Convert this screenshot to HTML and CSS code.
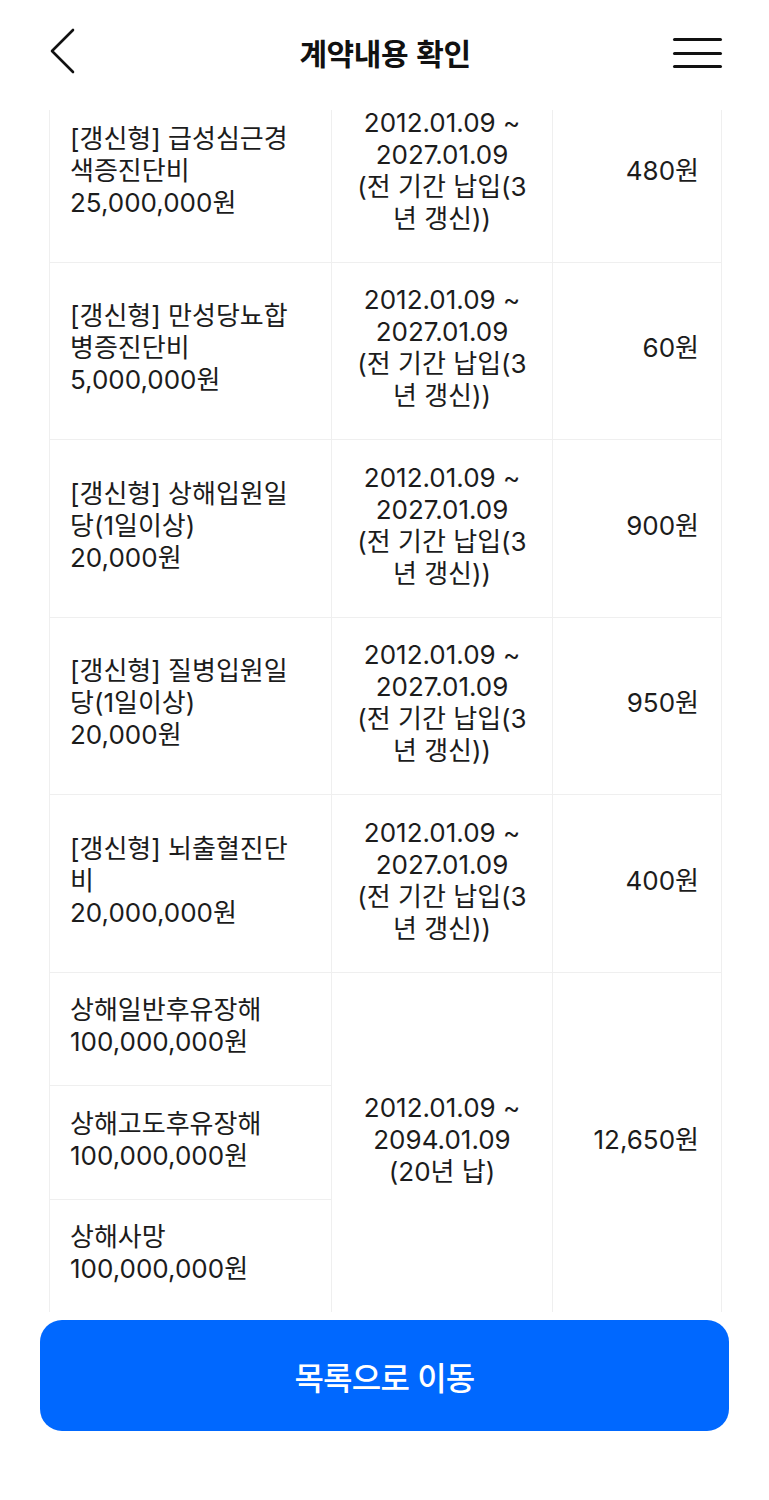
FILE: index.html
```html
<!DOCTYPE html>
<html lang="ko">
<head>
<meta charset="utf-8">
<title>계약내용 확인</title>
<link rel="stylesheet" href="styles.css">
</head>
<body>
<div class="page">
  <header class="topbar">
    <button class="icon-btn back" aria-label="뒤로">
      <svg width="30" height="46" viewBox="0 0 30 46"><path d="M25 2 L4 23 L25 44" fill="none" stroke="#111" stroke-width="2.6" stroke-linecap="round" stroke-linejoin="round"/></svg>
    </button>
    <h1 class="title">계약내용 확인</h1>
    <button class="icon-btn menu" aria-label="메뉴">
      <span class="bar"></span><span class="bar"></span><span class="bar"></span>
    </button>
  </header>

  <div class="scroll">
    <table class="contract">
      <colgroup>
        <col class="c1"><col class="c2"><col class="c3">
      </colgroup>
      <tbody>
        <tr>
          <td class="name">[갱신형] 급성심근경<br>색증진단비<br>25,000,000원</td>
          <td class="period">2012.01.09 ~<br>2027.01.09<br>(전 기간 납입(3<br>년 갱신))</td>
          <td class="amount">480원</td>
        </tr>
        <tr>
          <td class="name">[갱신형] 만성당뇨합<br>병증진단비<br>5,000,000원</td>
          <td class="period">2012.01.09 ~<br>2027.01.09<br>(전 기간 납입(3<br>년 갱신))</td>
          <td class="amount">60원</td>
        </tr>
        <tr>
          <td class="name">[갱신형] 상해입원일<br>당(1일이상)<br>20,000원</td>
          <td class="period">2012.01.09 ~<br>2027.01.09<br>(전 기간 납입(3<br>년 갱신))</td>
          <td class="amount">900원</td>
        </tr>
        <tr>
          <td class="name">[갱신형] 질병입원일<br>당(1일이상)<br>20,000원</td>
          <td class="period">2012.01.09 ~<br>2027.01.09<br>(전 기간 납입(3<br>년 갱신))</td>
          <td class="amount">950원</td>
        </tr>
        <tr>
          <td class="name">[갱신형] 뇌출혈진단<br>비<br>20,000,000원</td>
          <td class="period">2012.01.09 ~<br>2027.01.09<br>(전 기간 납입(3<br>년 갱신))</td>
          <td class="amount">400원</td>
        </tr>
        <tr>
          <td class="name">상해일반후유장해<br>100,000,000원</td>
          <td class="period" rowspan="3">2012.01.09 ~<br>2094.01.09<br>(20년 납)</td>
          <td class="amount" rowspan="3">12,650원</td>
        </tr>
        <tr>
          <td class="name">상해고도후유장해<br>100,000,000원</td>
        </tr>
        <tr>
          <td class="name">상해사망<br>100,000,000원</td>
        </tr>
      </tbody>
    </table>
  </div>

  <div class="actions">
    <button class="primary">목록으로 이동</button>
  </div>
</div>
</body>
</html>
```

FILE: styles.css
```css
* { box-sizing: border-box; }
html, body { margin: 0; padding: 0; background: #fff; }
body {
  font-family: "Inter", "Noto Sans CJK KR", sans-serif;
  color: #1c1c1c;
  width: 769px;
}
.page { width: 769px; }

.topbar {
  height: 110px;
  display: grid;
  grid-template-columns: 1fr auto 1fr;
  align-items: center;
  padding: 0 47px 0 48px;
}
.icon-btn {
  background: none;
  border: 0;
  padding: 0;
  margin: 0;
  display: flex;
  cursor: pointer;
}
.back { margin-top: -8px; justify-self: start; }
.menu {
  justify-self: end;
  flex-direction: column;
  gap: 10.5px;
  width: 49px;
  margin-top: -4px;
}
.bar {
  display: block;
  width: 49px;
  height: 3px;
  background: #111;
  border-radius: 1.5px;
}
.title {
  margin: 0;
  font-size: 30px;
  font-weight: 700;
  color: #111;
  letter-spacing: -0.4px;
  margin-top: -6px;
  font-family: "Noto Sans CJK KR", sans-serif;
}

.scroll {
  height: 1202px;
  overflow: hidden;
  padding: 0 48px 0 49px;
}
.contract {
  width: 672px;
  border-collapse: collapse;
  margin-top: -26px;
  table-layout: fixed;
  font-size: 26px;
  line-height: 32px;
}
.c1 { width: 282px; }
.c2 { width: 221px; }
.c3 { width: 169px; }
.contract td {
  border: 1px solid #efefef;
  padding: 21.5px 0 27px;
  vertical-align: middle;
}
.name {
  padding-left: 20px !important;
  padding-right: 6px !important;
  text-align: left;
}
.period { text-align: center; }
.amount {
  text-align: right;
  padding-right: 22px !important;
}

.actions {
  padding: 8px 40px 0 40px;
}
.primary {
  width: 689px;
  height: 111px;
  border: 0;
  border-radius: 22px;
  background: #0068ff;
  color: #fff;
  font-family: "Noto Sans CJK KR", sans-serif;
  font-size: 32px;
  font-weight: 500;
  letter-spacing: -0.8px;
  cursor: pointer;
}
```
